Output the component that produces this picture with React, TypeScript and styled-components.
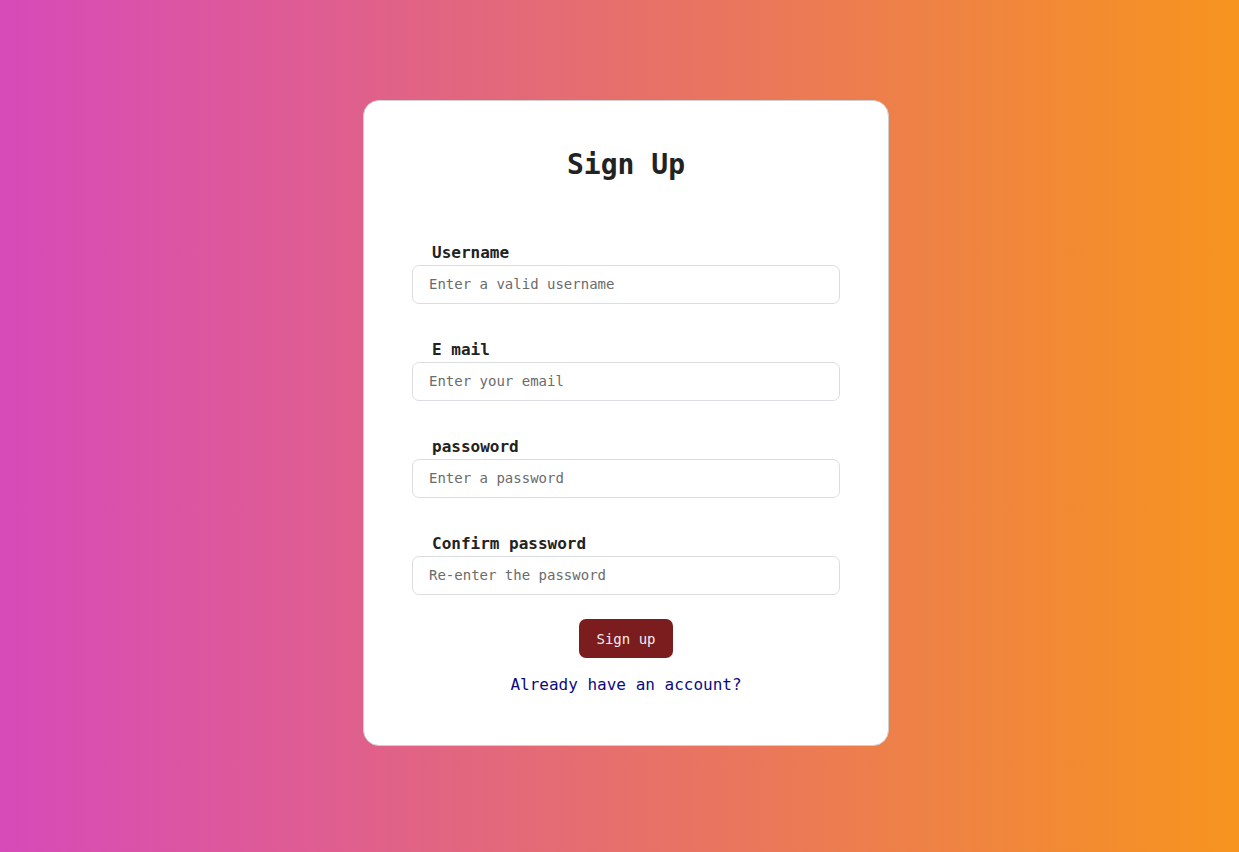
import React from "react";
import styled, { createGlobalStyle } from "styled-components";

const GlobalStyle = createGlobalStyle`
  html, body { margin: 0; padding: 0; }
  body { font-family: "DejaVu Sans Mono", monospace; }
  * { box-sizing: border-box; }
`;

const Page = styled.div`
  min-height: 100vh;
  display: flex;
  justify-content: center;
  align-items: flex-start;
  padding: 100px 0 0 13px;
  background: linear-gradient(to right, #d64ab9, #f7941e);
`;

const Card = styled.form`
  width: 526px;
  height: 646px;
  background: #ffffff;
  border: 1px solid #cfcfcf;
  border-radius: 16px;
  display: flex;
  flex-direction: column;
  align-items: center;
  padding: 47px 48px 0;
`;

const Title = styled.h2`
  margin: 0 0 62px;
  font-family: "DejaVu Sans Mono", monospace;
  font-size: 28px;
  font-weight: bold;
  color: #222222;
`;

const Field = styled.div`
  width: 428px;
  display: flex;
  flex-direction: column;
  margin-bottom: ${(p: { $last?: boolean }) => (p.$last ? "24px" : "36px")};
`;

const Label = styled.label`
  font-family: "DejaVu Sans Mono", monospace;
  font-size: 16px;
  font-weight: bold;
  color: #222222;
  padding-left: 20px;
  margin-bottom: 3px;
`;

const Input = styled.input`
  height: 39px;
  width: 100%;
  border: 1px solid #dcdde3;
  border-radius: 7px;
  padding: 0 16px 1px;
  font-family: "DejaVu Sans Mono", monospace;
  font-size: 14px;
  color: #333;
  outline: none;
  &::placeholder { color: #6b6b6b; }
`;

const Button = styled.button`
  height: 39px;
  padding: 0 17px;
  border: none;
  border-radius: 7px;
  background: #7b1c1e;
  color: #f4eeee;
  font-family: "DejaVu Sans Mono", monospace;
  font-size: 14px;
  cursor: pointer;
  margin-bottom: 17px;
`;

const LinkText = styled.a`
  font-family: "DejaVu Sans Mono", monospace;
  font-size: 16px;
  color: #0b0b80;
  text-decoration: none;
`;

const fields = [
  { label: "Username", placeholder: "Enter a valid username", type: "text" },
  { label: "E mail", placeholder: "Enter your email", type: "email" },
  { label: "passoword", placeholder: "Enter a password", type: "password" },
  { label: "Confirm password", placeholder: "Re-enter the password", type: "password" },
];

export default function App() {
  return (
    <>
      <GlobalStyle />
      <Page>
        <Card onSubmit={(e) => e.preventDefault()}>
          <Title>Sign Up</Title>
          {fields.map((f, i) => (
            <Field key={f.label} $last={i === fields.length - 1}>
              <Label>{f.label}</Label>
              <Input type={f.type} placeholder={f.placeholder} />
            </Field>
          ))}
          <Button type="submit">Sign up</Button>
          <LinkText href="#">Already have an account?</LinkText>
        </Card>
      </Page>
    </>
  );
}
